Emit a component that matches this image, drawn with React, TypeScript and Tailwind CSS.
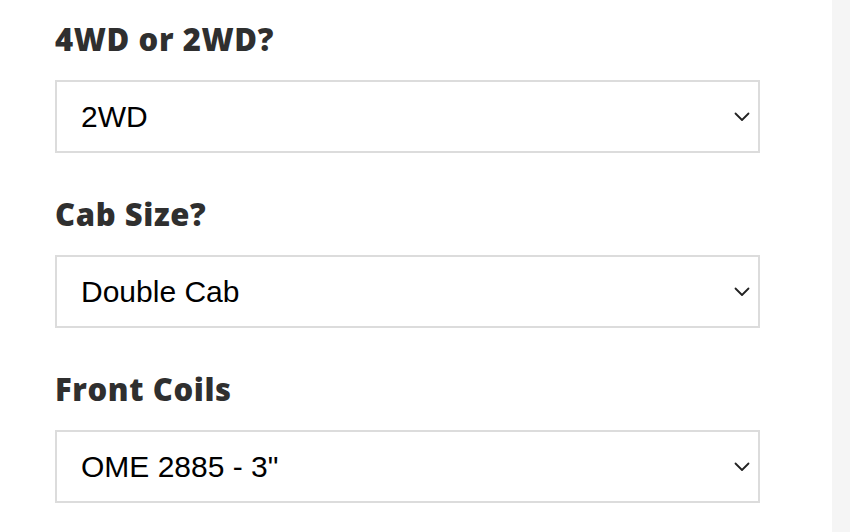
import { useState } from "react";

type Field = {
  label: string;
  options: string[];
  initial: string;
};

const fields: Field[] = [
  { label: "4WD or 2WD?", options: ["4WD", "2WD"], initial: "2WD" },
  { label: "Cab Size?", options: ["Single Cab", "Extra Cab", "Double Cab"], initial: "Double Cab" },
  { label: "Front Coils", options: ['OME 2885 - 3"', 'OME 2886 - 2"'], initial: 'OME 2885 - 3"' },
];

function Chevron() {
  return (
    <svg width="16" height="10" viewBox="0 0 16 10" fill="none" className="pointer-events-none absolute right-[10px] top-1/2 -translate-y-1/2">
      <polyline points="1.5,1.5 8,8 14.5,1.5" stroke="#222" strokeWidth="1.8" strokeLinecap="round" strokeLinejoin="round" />
    </svg>
  );
}

function SelectField({ field }: { field: Field }) {
  const [value, setValue] = useState(field.initial);
  return (
    <div className="mb-[43px]">
      <h3 className="mb-[23px] text-[31px] leading-[36px] font-extrabold tracking-[0.6px] text-[#2f2f2f] [font-family:'Open_Sans',sans-serif]">
        {field.label}
      </h3>
      <div className="relative w-[705px]">
        <select
          value={value}
          onChange={(e) => setValue(e.target.value)}
          className="h-[73px] w-full appearance-none border-2 border-[#dcdcdc] bg-white pl-6 pr-12 text-[30px] text-black outline-none [font-family:'Liberation_Sans',Arial,sans-serif]"
        >
          {field.options.map((opt) => (
            <option key={opt} value={opt}>
              {opt}
            </option>
          ))}
        </select>
        <Chevron />
      </div>
    </div>
  );
}

export default function App() {
  return (
    <div className="flex h-[532px] w-[850px] overflow-hidden bg-white">
      <div className="flex-1 pl-[55px] pt-[21px]">
        {fields.map((f) => (
          <SelectField key={f.label} field={f} />
        ))}
      </div>
      <div className="w-[18px] bg-[#f5f5f5]" />
    </div>
  );
}
